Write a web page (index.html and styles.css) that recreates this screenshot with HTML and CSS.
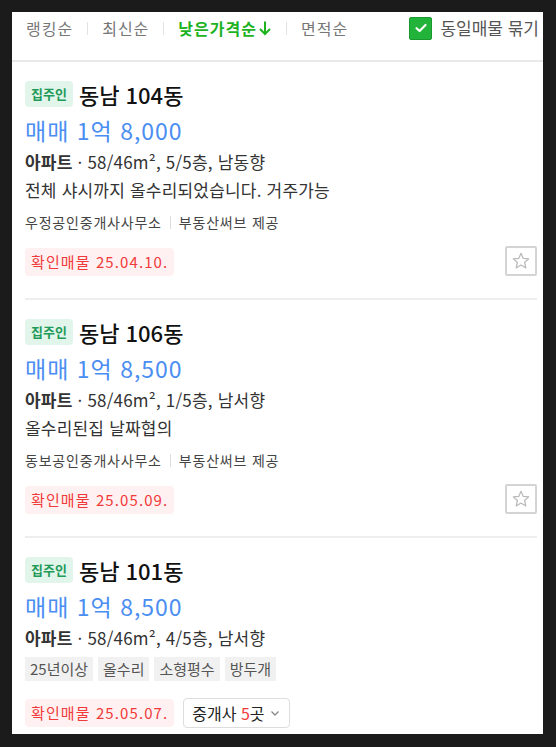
FILE: index.html
```html
<!DOCTYPE html>
<html lang="ko">
<head>
    <meta charset="UTF-8">
    <meta name="viewport" content="width=device-width, initial-scale=1.0">
    <title>매물 목록</title>
    <link rel="stylesheet" href="styles.css">
</head>
<body>
    <div class="panel">
        <!-- Sort bar -->
        <div class="sort-bar">
            <div class="sort-list">
                <span class="sort-item">랭킹순</span>
                <span class="sort-sep"></span>
                <span class="sort-item">최신순</span>
                <span class="sort-sep"></span>
                <span class="sort-item active">낮은가격순<svg class="sort-arrow" width="14" height="16" viewBox="0 0 14 16"><path d="M7 1.5 V14 M2 9 L7 14 L12 9" fill="none" stroke="#1db31f" stroke-width="2"/></svg></span>
                <span class="sort-sep"></span>
                <span class="sort-item">면적순</span>
            </div>
            <label class="group-check">
                <span class="checkbox">
                    <svg width="14" height="14" viewBox="0 0 14 14"><path d="M2.5 7.2 L5.6 10 L11.5 4" fill="none" stroke="#fff" stroke-width="2.2" stroke-linecap="round" stroke-linejoin="round"/></svg>
                </span>
                동일매물 묶기
            </label>
        </div>

        <!-- Listing 1 -->
        <div class="item">
            <div class="item-title">
                <span class="owner-badge">집주인</span>
                <span class="item-name">동남 104동</span>
            </div>
            <div class="price">매매 1억 8,000</div>
            <div class="info"><strong>아파트</strong> · 58/46m², 5/5층, 남동향</div>
            <div class="desc">전체 샤시까지 올수리되었습니다. 거주가능</div>
            <div class="agent">
                <span>우정공인중개사사무소</span>
                <span class="agent-sep"></span>
                <span>부동산써브 제공</span>
            </div>
            <div class="item-bottom">
                <span class="confirm">확인매물 25.04.10.</span>
                <button class="star-btn">
                    <svg width="20" height="20" viewBox="0 0 20 20"><path d="M10 2.3 L12.3 7.4 L17.7 7.9 L13.6 11.5 L14.8 16.9 L10 14.1 L5.2 16.9 L6.4 11.5 L2.3 7.9 L7.7 7.4 Z" fill="none" stroke="#b8b8b8" stroke-width="1.2" stroke-linejoin="round"/></svg>
                </button>
            </div>
        </div>

        <!-- Listing 2 -->
        <div class="item">
            <div class="item-title">
                <span class="owner-badge">집주인</span>
                <span class="item-name">동남 106동</span>
            </div>
            <div class="price">매매 1억 8,500</div>
            <div class="info"><strong>아파트</strong> · 58/46m², 1/5층, 남서향</div>
            <div class="desc">올수리된집 날짜협의</div>
            <div class="agent">
                <span>동보공인중개사사무소</span>
                <span class="agent-sep"></span>
                <span>부동산써브 제공</span>
            </div>
            <div class="item-bottom">
                <span class="confirm">확인매물 25.05.09.</span>
                <button class="star-btn">
                    <svg width="20" height="20" viewBox="0 0 20 20"><path d="M10 2.3 L12.3 7.4 L17.7 7.9 L13.6 11.5 L14.8 16.9 L10 14.1 L5.2 16.9 L6.4 11.5 L2.3 7.9 L7.7 7.4 Z" fill="none" stroke="#b8b8b8" stroke-width="1.2" stroke-linejoin="round"/></svg>
                </button>
            </div>
        </div>

        <!-- Listing 3 -->
        <div class="item last">
            <div class="item-title">
                <span class="owner-badge">집주인</span>
                <span class="item-name">동남 101동</span>
            </div>
            <div class="price">매매 1억 8,500</div>
            <div class="info"><strong>아파트</strong> · 58/46m², 4/5층, 남서향</div>
            <div class="tags">
                <span class="tag">25년이상</span>
                <span class="tag">올수리</span>
                <span class="tag">소형평수</span>
                <span class="tag">방두개</span>
            </div>
            <div class="item-bottom tight">
                <span class="confirm">확인매물 25.05.07.</span>
                <button class="agents-btn">
                    <span>중개사 <em>5</em>곳</span>
                    <svg width="12" height="12" viewBox="0 0 12 12"><path d="M2.5 4.5 L6 8 L9.5 4.5" fill="none" stroke="#888" stroke-width="1.3"/></svg>
                </button>
            </div>
        </div>
    </div>
</body>
</html>
```

FILE: styles.css
```css
/* Page frame */
body {
    margin: 0;
    padding: 12px 13px 13px 12px;
    background: #1b1b1b;
    font-family: "Noto Sans CJK KR", "Noto Sans", sans-serif;
    color: #222;
}

.panel {
    background: #fff;
    height: 722px;
    overflow: hidden;
}

/* Sort bar */
.sort-bar {
    height: 44px;
    border-bottom: 2px solid #e9e9e9;
    display: flex;
    justify-content: space-between;
    align-items: flex-start;
    padding: 4px 4px 0 14px;
}

.sort-list {
    display: flex;
    align-items: center;
    gap: 14px;
    height: 24px;
}

.sort-item {
    font-size: 16px;
    line-height: 24px;
    letter-spacing: 1px;
    color: #777;
    display: flex;
    align-items: center;
}

.sort-item.active {
    color: #1db31f;
    font-weight: bold;
}

.sort-arrow {
    margin-left: 1px;
}

.sort-sep {
    width: 1px;
    height: 13px;
    background: #e2e2e2;
}

.group-check {
    display: flex;
    align-items: center;
    gap: 8px;
    font-size: 17px;
    line-height: 24px;
    color: #555;
}

.checkbox {
    width: 23px;
    height: 23px;
    background: #22b33a;
    border: 1px solid #1a9a2e;
    box-sizing: border-box;
    border-radius: 2px;
    display: flex;
    align-items: center;
    justify-content: center;
}

/* Listing items */
.item {
    margin: 0 6px 0 13px;
    padding: 19px 0 22px;
    border-bottom: 2px solid #eeeeee;
}

.item.last {
    border-bottom: none;
}

.item-title {
    display: flex;
    align-items: center;
    gap: 6px;
    height: 26px;
}

.owner-badge {
    background: #e2f5ea;
    color: #229a5a;
    font-size: 13px;
    font-weight: bold;
    line-height: 26px;
    padding: 0 6px;
    border-radius: 4px;
}

.item-name {
    font-size: 22px;
    font-weight: 500;
    color: #111;
    line-height: 26px;
}

.price {
    margin-top: 8px;
    font-size: 23px;
    line-height: 30px;
    color: #4b8ef2;
    letter-spacing: 1px;
}

.info,
.desc {
    font-size: 17px;
    line-height: 28px;
    color: #333;
    letter-spacing: 0.2px;
}

.info {
    margin-top: 3px;
}

.info strong {
    font-weight: bold;
}

.agent {
    margin-top: 8px;
    display: flex;
    align-items: center;
    gap: 8px;
    font-size: 14px;
    line-height: 20px;
    letter-spacing: 0.8px;
    color: #444;
}

.agent-sep {
    width: 1px;
    height: 13px;
    background: #ddd;
}

.tags {
    margin-top: 5px;
    display: flex;
    gap: 5px;
}

.tag {
    background: #f1f1f1;
    color: #555;
    font-size: 15px;
    line-height: 24px;
    padding: 0 5px;
}

.item-bottom {
    margin-top: 14px;
    display: flex;
    align-items: flex-end;
    justify-content: space-between;
}

.item-bottom.tight {
    justify-content: flex-start;
    align-items: center;
    gap: 9px;
    margin-top: 17px;
}

.confirm {
    background: #fff1f1;
    color: #f03a3a;
    font-size: 15px;
    line-height: 28px;
    letter-spacing: 1.1px;
    padding: 0 6px;
    border-radius: 4px;
}

.star-btn {
    width: 32px;
    height: 30px;
    padding: 0;
    background: #fff;
    border: 2px solid #d4d4d4;
    border-radius: 2px;
    display: flex;
    align-items: center;
    justify-content: center;
}

.agents-btn {
    height: 30px;
    padding: 0 8px;
    background: #fff;
    border: 1px solid #ddd;
    border-radius: 4px;
    font-family: inherit;
    font-size: 16px;
    color: #222;
    display: flex;
    align-items: center;
    gap: 4px;
}

.agents-btn em {
    font-style: normal;
    color: #f03a3a;
}
```
